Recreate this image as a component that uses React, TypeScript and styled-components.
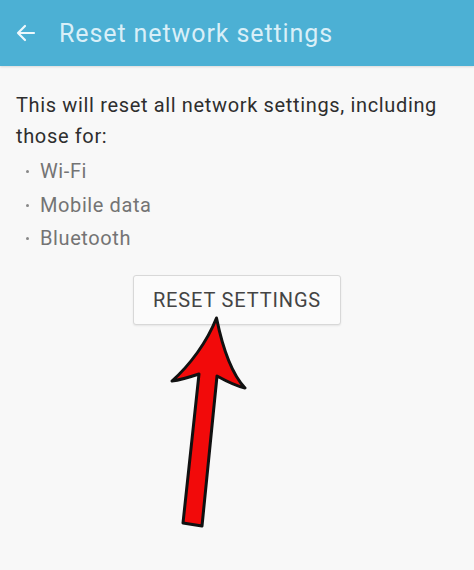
import styled, { createGlobalStyle } from 'styled-components'

const GlobalStyle = createGlobalStyle`
  html, body {
    margin: 0;
    padding: 0;
    background: #f8f8f8;
  }
  body {
    font-family: Roboto, 'Liberation Sans', sans-serif;
  }
`

const Screen = styled.div`
  position: relative;
  width: 474px;
  height: 570px;
  overflow: hidden;
  background: #f8f8f8;
`

const AppBar = styled.header`
  height: 66px;
  background: #4cb0d4;
  display: flex;
  align-items: center;
  padding-left: 14px;
  gap: 21px;
  box-shadow: 0 1px 2px rgba(0, 0, 0, 0.12);
`

const BackButton = styled.span`
  display: flex;
  align-items: center;
  color: #eef8fc;
`

const Title = styled.h1`
  margin: 0;
  font-size: 25px;
  font-weight: 400;
  color: #d9eff8;
  letter-spacing: 0.9px;
`

const Body = styled.main`
  padding: 24px 16px 0 16px;
`

const Intro = styled.p`
  margin: 0;
  font-size: 20px;
  line-height: 31px;
  color: #2e2e2e;
  letter-spacing: 0.65px;
`

const List = styled.ul`
  list-style: none;
  margin: 3px 0 0 0;
  padding: 0 0 0 10px;
`

const Item = styled.li`
  font-size: 20px;
  line-height: 33.5px;
  color: #747474;
  letter-spacing: 0.6px;
  display: flex;
  align-items: center;

  &::before {
    content: '';
    width: 3px;
    height: 3px;
    border-radius: 50%;
    background: #888;
    margin-right: 11px;
  }
`

const Actions = styled.div`
  display: flex;
  justify-content: center;
  padding-top: 19px;
`

const ResetButton = styled.button`
  width: 208px;
  height: 50px;
  background: #fbfbfb;
  border: 1px solid #d8d8d8;
  border-radius: 3px;
  box-shadow: 0 1px 2px rgba(0, 0, 0, 0.08);
  font-family: Roboto, 'Liberation Sans', sans-serif;
  font-size: 20px;
  color: #444;
  letter-spacing: 0.85px;
  padding: 0;
`

const Pointer = styled.svg`
  position: absolute;
  left: 0;
  top: 0;
  pointer-events: none;
`

export default function App() {
  return (
    <>
      <GlobalStyle />
      <Screen>
        <AppBar>
          <BackButton>
            <svg width="24" height="24" viewBox="0 0 24 24" fill="none" stroke="currentColor" strokeWidth="2.2" strokeLinecap="round" strokeLinejoin="round">
              <path d="M20 12H4M11 5l-7 7 7 7" />
            </svg>
          </BackButton>
          <Title>Reset network settings</Title>
        </AppBar>
        <Body>
          <Intro>This will reset all network settings, including those for:</Intro>
          <List>
            <Item>Wi-Fi</Item>
            <Item>Mobile data</Item>
            <Item>Bluetooth</Item>
          </List>
          <Actions>
            <ResetButton>RESET SETTINGS</ResetButton>
          </Actions>
        </Body>
        <Pointer width="474" height="570" viewBox="0 0 474 570">
          <path
            d="M216.5 318 C 222 345, 230 372, 245 388 C 236 386, 226 381, 217 376 L 202 526 L 183 523 L 199 374 C 190 377, 180 380, 172 381 C 190 365, 207 342, 216.5 318 Z"
            fill="#f20a0a"
            stroke="#111"
            strokeWidth="3"
            strokeLinejoin="round"
          />
        </Pointer>
      </Screen>
    </>
  )
}
